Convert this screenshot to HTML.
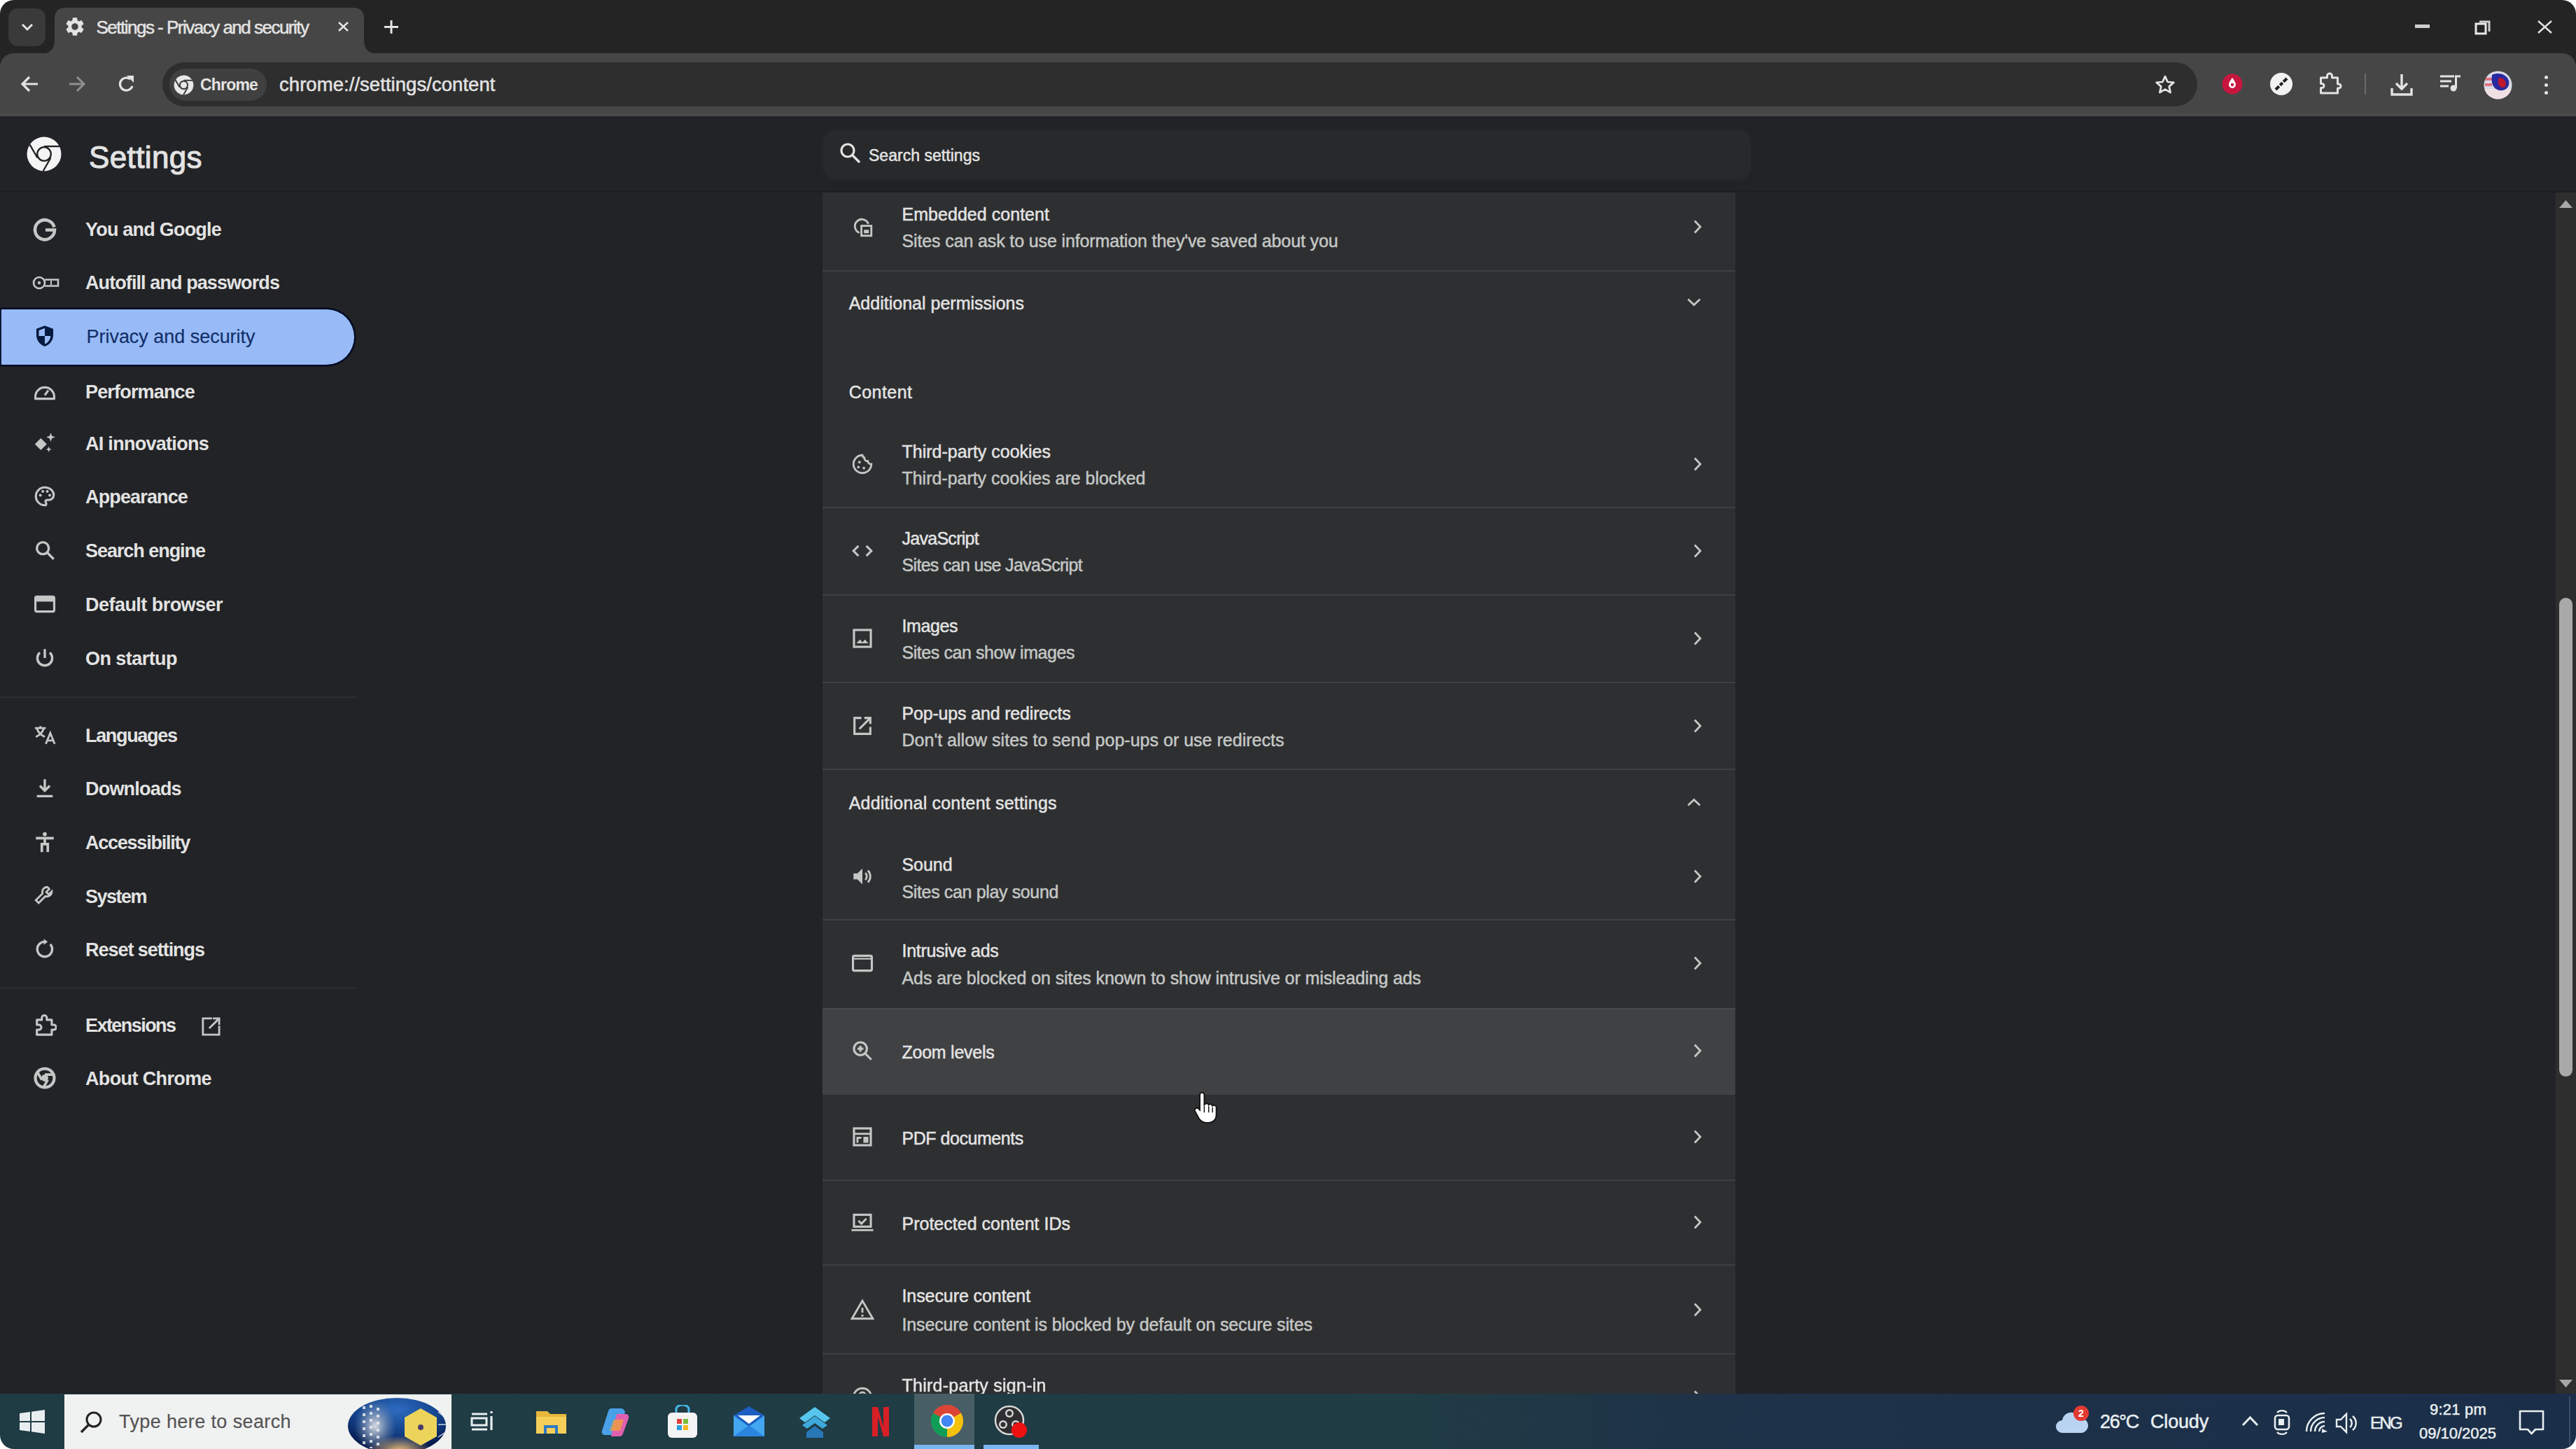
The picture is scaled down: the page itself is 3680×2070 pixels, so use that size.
<!DOCTYPE html>
<html><head><meta charset="utf-8"><title>Settings - Privacy and security</title>
<style>
html,body{margin:0;padding:0;background:#ffffff;width:3680px;height:2070px;overflow:hidden;font-family:"Liberation Sans",sans-serif;}
#root{position:relative;width:3680px;height:2070px;overflow:hidden;filter:blur(0.5px);}
</style></head><body><div id="root">
<div style="position:absolute;left:0;top:0;width:3680px;height:1991px;background:#242424;border-radius:20px 20px 0 0"></div>
<div style="position:absolute;left:12px;top:12px;width:53px;height:54px;background:#3a3a3a;border-radius:14px;"></div>
<svg style="position:absolute;left:26px;top:28px;" width="26" height="20" viewBox="0 0 26 20"><path d="M6 7l7 7 7-7" fill="none" stroke="#e3e3e3" stroke-width="3"/></svg>
<svg style="position:absolute;left:58px;top:11px" width="482" height="66" viewBox="0 0 482 66">
<path d="M0 66 Q20 66 20 46 L20 16 Q20 0 36 0 L446 0 Q462 0 462 16 L462 46 Q462 66 482 66 Z" fill="#464646"/></svg>
<svg style="position:absolute;left:91px;top:22px;" width="32" height="32" viewBox="0 0 24 24"><path fill="#e3e3e3" d="M19.14 12.94c.04-.3.06-.61.06-.94 0-.32-.02-.64-.07-.94l2.03-1.58a.49.49 0 00.12-.61l-1.92-3.32a.488.488 0 00-.59-.22l-2.39.96c-.5-.38-1.03-.7-1.62-.94l-.36-2.54a.484.484 0 00-.48-.41h-3.84c-.24 0-.43.17-.47.41l-.36 2.54c-.59.24-1.13.57-1.62.94l-2.39-.96c-.22-.08-.47 0-.59.22L2.74 8.87c-.12.21-.08.47.12.61l2.03 1.58c-.05.3-.09.63-.09.94s.02.64.07.94l-2.03 1.58a.49.49 0 00-.12.61l1.92 3.32c.12.22.37.29.59.22l2.39-.96c.5.38 1.03.7 1.62.94l.36 2.54c.05.24.24.41.48.41h3.84c.24 0 .44-.17.47-.41l.36-2.54c.59-.24 1.13-.56 1.62-.94l2.39.96c.22.08.47 0 .59-.22l1.92-3.32c.12-.22.07-.47-.12-.61l-2.01-1.58zM12 15.6c-1.98 0-3.6-1.62-3.6-3.6s1.62-3.6 3.6-3.6 3.6 1.62 3.6 3.6-1.62 3.6-3.6 3.6z"/></svg>
<div style="position:absolute;left:137.5px;top:26.4px;font-size:26px;line-height:26px;font-weight:400;color:#e3e3e3;letter-spacing:-1.507px;white-space:pre;-webkit-text-stroke:0.50px #e3e3e3;">Settings - Privacy and security</div>
<svg style="position:absolute;left:482px;top:30px;" width="17" height="16" viewBox="0 0 17 16"><path d="M2 2l13 12M15 2L2 14" stroke="#e3e3e3" stroke-width="2.6"/></svg>
<svg style="position:absolute;left:548px;top:28px;" width="22" height="21" viewBox="0 0 22 21"><path d="M11 1v19M1 10.5h20" stroke="#e3e3e3" stroke-width="3"/></svg>
<div style="position:absolute;left:3450px;top:35px;width:21px;height:5px;background:#cfcfcf;border-radius:0px;"></div>
<svg style="position:absolute;left:3535px;top:28px;" width="25" height="22" viewBox="0 0 25 22"><rect x="2" y="6" width="14" height="14" fill="none" stroke="#e8e8e8" stroke-width="3"/><path d="M7 3h14v14" fill="none" stroke="#cfcfcf" stroke-width="3"/></svg>
<svg style="position:absolute;left:3624px;top:28px;" width="23" height="21" viewBox="0 0 23 21"><path d="M2 2l19 17M21 2L2 19" stroke="#e3e3e3" stroke-width="2.4"/></svg>
<div style="position:absolute;left:0px;top:76px;width:3680px;height:90px;background:#464646;border-radius:20px 20px 0 0;"></div>
<div style="position:absolute;left:0px;top:162px;width:3680px;height:4px;background:#4c4c4c;border-radius:0px;"></div>
<svg style="position:absolute;left:28px;top:106px;" width="28" height="28" viewBox="0 0 28 28"><path d="M26 14H5M14 4L4 14l10 10" fill="none" stroke="#e3e3e3" stroke-width="3.2"/></svg>
<svg style="position:absolute;left:97px;top:107px;" width="26" height="26" viewBox="0 0 26 26"><path d="M2 13h21M13 3l10 10-10 10" fill="none" stroke="#8f8f8f" stroke-width="3"/></svg>
<svg style="position:absolute;left:167px;top:106px;" width="28" height="30" viewBox="0 0 28 30"><path d="M22 17a9 9 0 1 1-3-10" fill="none" stroke="#e3e3e3" stroke-width="3.2"/><path d="M14 2h10v10z" fill="#e3e3e3"/></svg>
<div style="position:absolute;left:232px;top:89px;width:2907px;height:63px;background:#2e2e2e;border-radius:32px;"></div>
<div style="position:absolute;left:242px;top:98px;width:139px;height:46px;background:#404040;border-radius:23px;"></div>
<svg style="position:absolute;left:248px;top:107px;" width="29" height="29" viewBox="0 0 48 48"><circle cx="24" cy="24" r="23" fill="#e8e8e8"/><circle cx="24" cy="24" r="11" fill="#404040"/><circle cx="24" cy="24" r="7.5" fill="#e8e8e8"/><path d="M24 13L45 13" stroke="#404040" stroke-width="3.4"/><path d="M14.5 29.5L4 11.5" stroke="#404040" stroke-width="3.4"/><path d="M33.5 29.5L23 47.5" stroke="#404040" stroke-width="3.4"/></svg>
<div style="position:absolute;left:286.0px;top:109.5px;font-size:23px;line-height:23px;font-weight:700;color:#e3e3e3;letter-spacing:-0.818px;white-space:pre;">Chrome</div>
<div style="position:absolute;left:399.0px;top:107.2px;font-size:27.5px;line-height:27.5px;font-weight:400;color:#e3e3e3;letter-spacing:0.050px;white-space:pre;-webkit-text-stroke:0.50px #e3e3e3;">chrome://settings/content</div>
<svg style="position:absolute;left:3078px;top:106px;" width="30" height="30" viewBox="0 0 24 24"><path d="M12 2.5l2.9 6.3 6.9.7-5.2 4.6 1.5 6.8L12 17.3l-6.1 3.6 1.5-6.8-5.2-4.6 6.9-.7z" fill="none" stroke="#e3e3e3" stroke-width="2.2" stroke-linejoin="round"/></svg>
<svg style="position:absolute;left:3174px;top:105px;" width="30" height="30" viewBox="0 0 30 30"><circle cx="15" cy="15" r="14.5" fill="#c8163f"/><path d="M15 6c-1 2-5 6-5 10a5 5 0 0 0 10 0c0-4-4-8-5-10z" fill="#fff"/><circle cx="15" cy="16" r="2.2" fill="#c8163f"/></svg>
<svg style="position:absolute;left:3242px;top:103px;" width="34" height="34" viewBox="0 0 34 34"><circle cx="17" cy="17" r="16" fill="#f2f2f2"/><path d="M9 25L25 9" stroke="#222" stroke-width="4"/><path d="M12 17l5 5M17 12l5 5" stroke="#f2f2f2" stroke-width="2"/></svg>
<svg style="position:absolute;left:3311px;top:103px;" width="35" height="33" viewBox="0 0 32 33"><path d="M3 8h9V5.5a3.5 3.5 0 0 1 7 0V8h8v9h1.5a3 3 0 0 1 0 6H27v7H3v-7.5h1.5a3 3 0 0 0 0-6H3z" fill="none" stroke="#e3e3e3" stroke-width="3" stroke-linejoin="round"/></svg>
<div style="position:absolute;left:3378px;top:105px;width:2px;height:30px;background:#6a6a6a;border-radius:0px;"></div>
<svg style="position:absolute;left:3414px;top:104px;" width="34" height="34" viewBox="0 0 34 34"><path d="M17 2v21M9 15l8 8 8-8" fill="none" stroke="#e3e3e3" stroke-width="3.4"/><path d="M3 22v9h28v-9" fill="none" stroke="#e3e3e3" stroke-width="3.4"/></svg>
<svg style="position:absolute;left:3485px;top:106px;" width="31" height="26" viewBox="0 0 31 26"><path d="M1 3h20M1 10h16M1 17h12" stroke="#e3e3e3" stroke-width="3"/><path d="M22 3h8M23.5 3v17" stroke="#e3e3e3" stroke-width="3"/><circle cx="20" cy="20" r="4.5" fill="#e3e3e3"/></svg>
<svg style="position:absolute;left:3548px;top:101px" width="41" height="41" viewBox="0 0 41 41">
<defs><clipPath id="av"><circle cx="20.5" cy="20.5" r="20"/></clipPath></defs>
<g clip-path="url(#av)"><rect width="41" height="41" fill="#d9dbe8"/><rect x="0" y="26" width="41" height="15" fill="#f0e0e4"/>
<path d="M2 10h12v4H2zM2 18h10v4H2z" fill="#e3707f"/><path d="M12 6c8-4 20-2 24 8 2 8-4 16-14 14-8-2-12-10-10-22z" fill="#2a2aa0"/>
<path d="M22 10c6 0 10 4 10 9s-4 6-8 4c-3-2-4-8-2-13z" fill="#c0182c"/></g></svg>
<div style="position:absolute;left:3635px;top:107.5px;width:5px;height:5px;background:#e3e3e3;border-radius:3px;"></div>
<div style="position:absolute;left:3635px;top:118.5px;width:5px;height:5px;background:#e3e3e3;border-radius:3px;"></div>
<div style="position:absolute;left:3635px;top:129.5px;width:5px;height:5px;background:#e3e3e3;border-radius:3px;"></div>
<div style="position:absolute;left:0px;top:167px;width:3680px;height:1824px;background:#222326;border-radius:0px;"></div>
<div style="position:absolute;left:0px;top:272px;width:3680px;height:3px;background:#1d1e20;border-radius:0px;"></div>
<svg style="position:absolute;left:38px;top:195px" width="50" height="50" viewBox="0 0 48 48">
<circle cx="24" cy="24" r="23.5" fill="#f4f4f4"/><circle cx="24" cy="24" r="10.5" fill="#202124"/><circle cx="24" cy="24" r="8.3" fill="#f4f4f4"/>
<path d="M24 13.5L45 13.5" stroke="#202124" stroke-width="2.2"/><path d="M14.9 29.3L4.4 11.1" stroke="#202124" stroke-width="2.2"/><path d="M33.1 29.3L22.6 47.5" stroke="#202124" stroke-width="2.2"/></svg>
<div style="position:absolute;left:127.0px;top:202.8px;font-size:44px;line-height:44px;font-weight:400;color:#e3e3e3;letter-spacing:0.377px;white-space:pre;-webkit-text-stroke:1.1px #e3e3e3;">Settings</div>
<div style="position:absolute;left:1176px;top:186px;width:1325px;height:70px;background:#28292b;border-radius:18px;box-shadow:0 0 6px 2px #26272a"></div>
<svg style="position:absolute;left:1199px;top:203px;" width="32" height="32" viewBox="0 0 32 32"><circle cx="12" cy="12" r="9" fill="none" stroke="#e3e3e3" stroke-width="3.2"/><path d="M18.5 18.5L29 29" stroke="#e3e3e3" stroke-width="3.4"/></svg>
<div style="position:absolute;left:1241.0px;top:210.5px;font-size:23px;line-height:23px;font-weight:400;color:#e3e3e3;letter-spacing:0.031px;white-space:pre;-webkit-text-stroke:0.50px #e3e3e3;">Search settings</div>
<div style="position:absolute;left:0px;top:441.5px;width:506px;height:79px;background:#98bbf7;border-radius:0 39.5px 39.5px 0;box-shadow:0 0 0 2.5px #020b24"></div>
<div style="position:absolute;left:0px;top:441.5px;width:2px;height:79px;background:#0a1a3a;border-radius:0px;"></div>
<div style="position:absolute;left:122.0px;top:315.1px;font-size:27px;line-height:27px;font-weight:700;color:#e3e3e3;letter-spacing:-0.786px;white-space:pre;">You and Google</div>
<svg style="position:absolute;left:47px;top:310px;" width="36" height="36" viewBox="0 0 36 36"><path d="M30.5 14.5A14 14 0 1 0 31 18.5H18" fill="none" stroke="#c4c7c5" stroke-width="4.6"/></svg>
<div style="position:absolute;left:122.0px;top:391.1px;font-size:27px;line-height:27px;font-weight:700;color:#e3e3e3;letter-spacing:-0.911px;white-space:pre;">Autofill and passwords</div>
<svg style="position:absolute;left:46px;top:392px;" width="40" height="24" viewBox="0 0 40 24"><circle cx="10" cy="12" r="8" fill="none" stroke="#c4c7c5" stroke-width="2.6"/><circle cx="10" cy="12" r="2.2" fill="#c4c7c5"/><path d="M18 7.5h19v9H18" fill="none" stroke="#c4c7c5" stroke-width="2.6"/><path d="M27 9v6" stroke="#c4c7c5" stroke-width="2"/></svg>
<div style="position:absolute;left:123.5px;top:468.1px;font-size:27px;line-height:27px;font-weight:400;color:#14306a;letter-spacing:-0.030px;white-space:pre;-webkit-text-stroke:0.2px #14306a;">Privacy and security</div>
<svg style="position:absolute;left:47px;top:463px;" width="34" height="34" viewBox="0 0 24 24"><path d="M12 1.5L3.5 4.8v6.2c0 5.3 3.6 10 8.5 11.5 4.9-1.5 8.5-6.2 8.5-11.5V4.8z" fill="#061a40"/><path d="M12 4L6 6.4V12h6zM12 12v8.2c3.1-1.3 5.5-4.4 5.9-8.2z" fill="#98bbf7"/></svg>
<div style="position:absolute;left:122.0px;top:547.1px;font-size:27px;line-height:27px;font-weight:700;color:#e3e3e3;letter-spacing:-0.825px;white-space:pre;">Performance</div>
<svg style="position:absolute;left:47px;top:542px;" width="34" height="34" viewBox="0 0 24 24"><path d="M2.5 17.5a9.5 9.5 0 1 1 19 0v2h-19z" fill="none" stroke="#c4c7c5" stroke-width="2.2" stroke-linejoin="round"/><path d="M12 16l3.5-5" stroke="#c4c7c5" stroke-width="2.2"/></svg>
<div style="position:absolute;left:122.0px;top:621.1px;font-size:27px;line-height:27px;font-weight:700;color:#e3e3e3;letter-spacing:-0.715px;white-space:pre;">AI innovations</div>
<svg style="position:absolute;left:47px;top:616px;" width="34" height="34" viewBox="0 0 24 24"><path d="M8 7l6 6-6 6-6-6z" fill="#c4c7c5"/><path d="M18 1.5l1.2 3.3 3.3 1.2-3.3 1.2L18 10.5l-1.2-3.3L13.5 6l3.3-1.2z" fill="#c4c7c5"/><path d="M16 15.5l.8 2 2 .8-2 .8-.8 2-.8-2-2-.8 2-.8z" fill="#c4c7c5"/></svg>
<div style="position:absolute;left:122.0px;top:697.1px;font-size:27px;line-height:27px;font-weight:700;color:#e3e3e3;letter-spacing:-0.858px;white-space:pre;">Appearance</div>
<svg style="position:absolute;left:47px;top:692px;" width="34" height="34" viewBox="0 0 24 24"><path d="M12 3a9 9 0 0 0 0 18c1 0 1.5-.7 1.5-1.5 0-1-.8-1.3-.8-2.2 0-.9.7-1.6 1.6-1.6H16a5 5 0 0 0 5-5c0-4.3-4-7.7-9-7.7z" fill="none" stroke="#c4c7c5" stroke-width="2.2"/><circle cx="7.5" cy="11" r="1.4" fill="#c4c7c5"/><circle cx="10" cy="7" r="1.4" fill="#c4c7c5"/><circle cx="14.5" cy="7" r="1.4" fill="#c4c7c5"/><circle cx="17" cy="11" r="1.4" fill="#c4c7c5"/></svg>
<div style="position:absolute;left:122.0px;top:774.1px;font-size:27px;line-height:27px;font-weight:700;color:#e3e3e3;letter-spacing:-1.044px;white-space:pre;">Search engine</div>
<svg style="position:absolute;left:47px;top:769px;" width="34" height="34" viewBox="0 0 24 24"><circle cx="10" cy="10" r="6" fill="none" stroke="#c4c7c5" stroke-width="2.4"/><path d="M14.5 14.5L21 21" stroke="#c4c7c5" stroke-width="2.4"/></svg>
<div style="position:absolute;left:122.0px;top:851.1px;font-size:27px;line-height:27px;font-weight:700;color:#e3e3e3;letter-spacing:-0.536px;white-space:pre;">Default browser</div>
<svg style="position:absolute;left:47px;top:846px;" width="34" height="34" viewBox="0 0 24 24"><rect x="2.5" y="4.5" width="19" height="15" rx="1.5" fill="none" stroke="#c4c7c5" stroke-width="2.2"/><path d="M2.5 7.5h19" stroke="#c4c7c5" stroke-width="4"/></svg>
<div style="position:absolute;left:122.0px;top:928.1px;font-size:27px;line-height:27px;font-weight:700;color:#e3e3e3;letter-spacing:-0.552px;white-space:pre;">On startup</div>
<svg style="position:absolute;left:47px;top:923px;" width="34" height="34" viewBox="0 0 24 24"><path d="M12 3v9" stroke="#c4c7c5" stroke-width="2.4"/><path d="M7 6.5a7.5 7.5 0 1 0 10 0" fill="none" stroke="#c4c7c5" stroke-width="2.4"/></svg>
<div style="position:absolute;left:122.0px;top:1038.1px;font-size:27px;line-height:27px;font-weight:700;color:#e3e3e3;letter-spacing:-1.326px;white-space:pre;">Languages</div>
<svg style="position:absolute;left:47px;top:1033px;" width="34" height="34" viewBox="0 0 24 24"><path d="M2 5h11M7.5 3v2M4 5c1 4 4 7 8 9M11 5c-1 4-4 7-8 9" fill="none" stroke="#c4c7c5" stroke-width="2"/><path d="M13 21l4.5-11 4.5 11M14.5 17.5h6" fill="none" stroke="#c4c7c5" stroke-width="2"/></svg>
<div style="position:absolute;left:122.0px;top:1114.1px;font-size:27px;line-height:27px;font-weight:700;color:#e3e3e3;letter-spacing:-0.802px;white-space:pre;">Downloads</div>
<svg style="position:absolute;left:47px;top:1109px;" width="34" height="34" viewBox="0 0 24 24"><path d="M12 3v11M7 9.5l5 5 5-5M4 20h16" fill="none" stroke="#c4c7c5" stroke-width="2.4"/></svg>
<div style="position:absolute;left:122.0px;top:1191.1px;font-size:27px;line-height:27px;font-weight:700;color:#e3e3e3;letter-spacing:-1.238px;white-space:pre;">Accessibility</div>
<svg style="position:absolute;left:47px;top:1186px;" width="34" height="34" viewBox="0 0 24 24"><circle cx="12" cy="4" r="2" fill="#c4c7c5"/><path d="M3 8h18M12 8v6M9 22v-8h6v8" fill="none" stroke="#c4c7c5" stroke-width="2.6"/></svg>
<div style="position:absolute;left:122.0px;top:1267.6px;font-size:27px;line-height:27px;font-weight:700;color:#e3e3e3;letter-spacing:-1.510px;white-space:pre;">System</div>
<svg style="position:absolute;left:47px;top:1262.5px;" width="34" height="34" viewBox="0 0 24 24"><path d="M14.5 3a5 5 0 0 0-4.8 6.5L3 16.2 5.8 19l6.7-6.7A5 5 0 0 0 19 7.5l-3 3-2.5-2.5 3-3A5 5 0 0 0 14.5 3z" fill="none" stroke="#c4c7c5" stroke-width="2"/></svg>
<div style="position:absolute;left:122.0px;top:1344.1px;font-size:27px;line-height:27px;font-weight:700;color:#e3e3e3;letter-spacing:-1.040px;white-space:pre;">Reset settings</div>
<svg style="position:absolute;left:47px;top:1339px;" width="34" height="34" viewBox="0 0 24 24"><path d="M17.5 7A7.5 7.5 0 1 1 12 4.5" fill="none" stroke="#c4c7c5" stroke-width="2.4"/><path d="M11 1.5l4 3-4 3z" fill="#c4c7c5"/></svg>
<div style="position:absolute;left:122.0px;top:1452.1px;font-size:27px;line-height:27px;font-weight:700;color:#e3e3e3;letter-spacing:-1.555px;white-space:pre;">Extensions</div>
<svg style="position:absolute;left:47px;top:1447px;" width="34" height="34" viewBox="0 0 24 24"><path d="M4 7h5V5a2.5 2.5 0 0 1 5 0v2h5v5h2a2.5 2.5 0 0 1 0 5h-2v5H4v-5h2a2.5 2.5 0 0 0 0-5H4z" fill="none" stroke="#c4c7c5" stroke-width="2.2" stroke-linejoin="round"/></svg>
<div style="position:absolute;left:122.0px;top:1528.1px;font-size:27px;line-height:27px;font-weight:700;color:#e3e3e3;letter-spacing:-0.624px;white-space:pre;">About Chrome</div>
<svg style="position:absolute;left:47px;top:1523px;" width="34" height="34" viewBox="0 0 24 24"><circle cx="12" cy="12" r="9.5" fill="none" stroke="#c4c7c5" stroke-width="3"/><circle cx="12" cy="12" r="3.5" fill="#c4c7c5"/><path d="M12 8.5h9M9 13.8L4.5 6M15 13.8l-4.5 7.8" stroke="#c4c7c5" stroke-width="2.6"/></svg>
<div style="position:absolute;left:0px;top:995px;width:510px;height:2px;background:#2e2f32;border-radius:0px;"></div>
<div style="position:absolute;left:0px;top:1410px;width:510px;height:2px;background:#2c2d30;border-radius:0px;"></div>
<svg style="position:absolute;left:285px;top:1451px;" width="33" height="31" viewBox="0 0 24 24"><path d="M13 3H3v18h18V11" fill="none" stroke="#c4c7c5" stroke-width="2.2"/><path d="M10 14L21 3M14 3h7v7" fill="none" stroke="#c4c7c5" stroke-width="2.2"/></svg>
<div style="position:absolute;left:1175px;top:275px;width:1304px;height:1716px;background:#2e2f31;border-radius:0px;"></div>
<div style="position:absolute;left:1288.5px;top:293.8px;font-size:25px;line-height:25px;font-weight:400;color:#e3e3e3;letter-spacing:0.038px;white-space:pre;-webkit-text-stroke:0.50px #e3e3e3;">Embedded content</div>
<div style="position:absolute;left:1288.5px;top:331.8px;font-size:25px;line-height:25px;font-weight:400;color:#c4c7c5;letter-spacing:-0.128px;white-space:pre;-webkit-text-stroke:0.50px #c4c7c5;">Sites can ask to use information they've saved about you</div>
<svg style="position:absolute;left:1215px;top:307px;" width="34" height="34" viewBox="0 0 24 24"><path d="M9 18a7 7 0 1 1 9-9" fill="none" stroke="#c4c7c5" stroke-width="2"/><rect x="11" y="11" width="10" height="10" fill="none" stroke="#c4c7c5" stroke-width="2"/><rect x="13.5" y="15" width="5" height="3.5" fill="#c4c7c5"/></svg>
<svg style="position:absolute;left:2417px;top:313px;" width="16" height="22" viewBox="0 0 16 22"><path d="M4 2.5l8 8.5-8 8.5" fill="none" stroke="#c4c7c5" stroke-width="2.8"/></svg>
<div style="position:absolute;left:1175px;top:386px;width:1304px;height:2px;background:#3f4042;border-radius:0px;"></div>
<div style="position:absolute;left:1212.7px;top:421.3px;font-size:25px;line-height:25px;font-weight:400;color:#e3e3e3;letter-spacing:0.008px;white-space:pre;-webkit-text-stroke:0.50px #e3e3e3;">Additional permissions</div>
<svg style="position:absolute;left:2409px;top:424px;" width="22" height="16" viewBox="0 0 22 16"><path d="M2.5 3.5l8.5 8 8.5-8" fill="none" stroke="#c4c7c5" stroke-width="2.8"/></svg>
<div style="position:absolute;left:1212.7px;top:548.1px;font-size:25px;line-height:25px;font-weight:400;color:#e3e3e3;letter-spacing:0.462px;white-space:pre;-webkit-text-stroke:0.50px #e3e3e3;">Content</div>
<div style="position:absolute;left:1288.5px;top:632.8px;font-size:25px;line-height:25px;font-weight:400;color:#e3e3e3;letter-spacing:-0.004px;white-space:pre;-webkit-text-stroke:0.50px #e3e3e3;">Third-party cookies</div>
<div style="position:absolute;left:1288.5px;top:670.8px;font-size:25px;line-height:25px;font-weight:400;color:#c4c7c5;letter-spacing:-0.025px;white-space:pre;-webkit-text-stroke:0.50px #c4c7c5;">Third-party cookies are blocked</div>
<svg style="position:absolute;left:1215px;top:646px;" width="34" height="34" viewBox="0 0 24 24"><path d="M12 3a9 9 0 1 0 9 9 3 3 0 0 1-3.5-3A3 3 0 0 1 14 5.5 3 3 0 0 1 12 3z" fill="none" stroke="#c4c7c5" stroke-width="2"/><circle cx="9" cy="10" r="1.3" fill="#c4c7c5"/><circle cx="8" cy="15" r="1.3" fill="#c4c7c5"/><circle cx="13.5" cy="16" r="1.3" fill="#c4c7c5"/></svg>
<svg style="position:absolute;left:2417px;top:652px;" width="16" height="22" viewBox="0 0 16 22"><path d="M4 2.5l8 8.5-8 8.5" fill="none" stroke="#c4c7c5" stroke-width="2.8"/></svg>
<div style="position:absolute;left:1175px;top:724px;width:1304px;height:2px;background:#3f4042;border-radius:0px;"></div>
<div style="position:absolute;left:1288.5px;top:756.8px;font-size:25px;line-height:25px;font-weight:400;color:#e3e3e3;letter-spacing:-0.722px;white-space:pre;-webkit-text-stroke:0.50px #e3e3e3;">JavaScript</div>
<div style="position:absolute;left:1288.5px;top:794.8px;font-size:25px;line-height:25px;font-weight:400;color:#c4c7c5;letter-spacing:-0.677px;white-space:pre;-webkit-text-stroke:0.50px #c4c7c5;">Sites can use JavaScript</div>
<svg style="position:absolute;left:1215px;top:770px;" width="34" height="34" viewBox="0 0 24 24"><path d="M8 7l-5 5 5 5M16 7l5 5-5 5" fill="none" stroke="#c4c7c5" stroke-width="2.2"/></svg>
<svg style="position:absolute;left:2417px;top:776px;" width="16" height="22" viewBox="0 0 16 22"><path d="M4 2.5l8 8.5-8 8.5" fill="none" stroke="#c4c7c5" stroke-width="2.8"/></svg>
<div style="position:absolute;left:1175px;top:849px;width:1304px;height:2px;background:#3f4042;border-radius:0px;"></div>
<div style="position:absolute;left:1288.5px;top:881.8px;font-size:25px;line-height:25px;font-weight:400;color:#e3e3e3;letter-spacing:-0.414px;white-space:pre;-webkit-text-stroke:0.50px #e3e3e3;">Images</div>
<div style="position:absolute;left:1288.5px;top:919.8px;font-size:25px;line-height:25px;font-weight:400;color:#c4c7c5;letter-spacing:-0.438px;white-space:pre;-webkit-text-stroke:0.50px #c4c7c5;">Sites can show images</div>
<svg style="position:absolute;left:1215px;top:895px;" width="34" height="34" viewBox="0 0 24 24"><rect x="3.5" y="3.5" width="17" height="17" fill="none" stroke="#c4c7c5" stroke-width="2.2"/><path d="M6 17l3.5-4 2.5 3 2.5-3 3.5 4z" fill="#c4c7c5"/></svg>
<svg style="position:absolute;left:2417px;top:901px;" width="16" height="22" viewBox="0 0 16 22"><path d="M4 2.5l8 8.5-8 8.5" fill="none" stroke="#c4c7c5" stroke-width="2.8"/></svg>
<div style="position:absolute;left:1175px;top:974px;width:1304px;height:2px;background:#3f4042;border-radius:0px;"></div>
<div style="position:absolute;left:1288.5px;top:1006.8px;font-size:25px;line-height:25px;font-weight:400;color:#e3e3e3;letter-spacing:-0.171px;white-space:pre;-webkit-text-stroke:0.50px #e3e3e3;">Pop-ups and redirects</div>
<div style="position:absolute;left:1288.5px;top:1044.8px;font-size:25px;line-height:25px;font-weight:400;color:#c4c7c5;letter-spacing:0.013px;white-space:pre;-webkit-text-stroke:0.50px #c4c7c5;">Don't allow sites to send pop-ups or use redirects</div>
<svg style="position:absolute;left:1215px;top:1020px;" width="34" height="34" viewBox="0 0 24 24"><path d="M11 4H4v16h16v-7" fill="none" stroke="#c4c7c5" stroke-width="2.2"/><path d="M9 15L20 4M14 4h6v6" fill="none" stroke="#c4c7c5" stroke-width="2.2"/></svg>
<svg style="position:absolute;left:2417px;top:1026px;" width="16" height="22" viewBox="0 0 16 22"><path d="M4 2.5l8 8.5-8 8.5" fill="none" stroke="#c4c7c5" stroke-width="2.8"/></svg>
<div style="position:absolute;left:1175px;top:1098px;width:1304px;height:2px;background:#3f4042;border-radius:0px;"></div>
<div style="position:absolute;left:1212.7px;top:1134.8px;font-size:25px;line-height:25px;font-weight:400;color:#e3e3e3;letter-spacing:0.190px;white-space:pre;-webkit-text-stroke:0.50px #e3e3e3;">Additional content settings</div>
<svg style="position:absolute;left:2409px;top:1138px;" width="22" height="16" viewBox="0 0 22 16"><path d="M2.5 12.5l8.5-8 8.5 8" fill="none" stroke="#c4c7c5" stroke-width="2.8"/></svg>
<div style="position:absolute;left:1288.5px;top:1223.3px;font-size:25px;line-height:25px;font-weight:400;color:#e3e3e3;letter-spacing:-0.059px;white-space:pre;-webkit-text-stroke:0.50px #e3e3e3;">Sound</div>
<div style="position:absolute;left:1288.5px;top:1261.8px;font-size:25px;line-height:25px;font-weight:400;color:#c4c7c5;letter-spacing:-0.360px;white-space:pre;-webkit-text-stroke:0.50px #c4c7c5;">Sites can play sound</div>
<svg style="position:absolute;left:1215px;top:1235px;" width="34" height="34" viewBox="0 0 24 24"><path d="M3 9v6h4l5 5V4L7 9z" fill="#c4c7c5"/><path d="M15 8.5a5 5 0 0 1 0 7M17.5 6a8.5 8.5 0 0 1 0 12" fill="none" stroke="#c4c7c5" stroke-width="2"/></svg>
<svg style="position:absolute;left:2417px;top:1241px;" width="16" height="22" viewBox="0 0 16 22"><path d="M4 2.5l8 8.5-8 8.5" fill="none" stroke="#c4c7c5" stroke-width="2.8"/></svg>
<div style="position:absolute;left:1288.5px;top:1346.3px;font-size:25px;line-height:25px;font-weight:400;color:#e3e3e3;letter-spacing:-0.288px;white-space:pre;-webkit-text-stroke:0.50px #e3e3e3;">Intrusive ads</div>
<div style="position:absolute;left:1288.5px;top:1384.8px;font-size:25px;line-height:25px;font-weight:400;color:#c4c7c5;letter-spacing:-0.093px;white-space:pre;-webkit-text-stroke:0.50px #c4c7c5;">Ads are blocked on sites known to show intrusive or misleading ads</div>
<svg style="position:absolute;left:1215px;top:1359px;" width="34" height="34" viewBox="0 0 24 24"><rect x="2.5" y="4.5" width="19" height="15" rx="1.5" fill="none" stroke="#c4c7c5" stroke-width="2.2"/><path d="M2.5 7.5h19" stroke="#c4c7c5" stroke-width="1.6"/></svg>
<svg style="position:absolute;left:2417px;top:1365px;" width="16" height="22" viewBox="0 0 16 22"><path d="M4 2.5l8 8.5-8 8.5" fill="none" stroke="#c4c7c5" stroke-width="2.8"/></svg>
<div style="position:absolute;left:1175px;top:1313px;width:1304px;height:2px;background:#3f4042;border-radius:0px;"></div>
<div style="position:absolute;left:1175px;top:1440px;width:1304px;height:124px;background:#404143;border-radius:0px;"></div>
<div style="position:absolute;left:1175px;top:1440px;width:1304px;height:2px;background:#48494b;border-radius:0px;"></div>
<div style="position:absolute;left:1288.5px;top:1490.8px;font-size:25px;line-height:25px;font-weight:400;color:#e3e3e3;letter-spacing:-0.251px;white-space:pre;-webkit-text-stroke:0.50px #e3e3e3;">Zoom levels</div>
<svg style="position:absolute;left:1215px;top:1484px;" width="34" height="34" viewBox="0 0 24 24"><circle cx="10" cy="10" r="6.5" fill="none" stroke="#c4c7c5" stroke-width="2.2"/><path d="M15 15l6 6M10 7v6M7 10h6" stroke="#c4c7c5" stroke-width="2.2"/></svg>
<svg style="position:absolute;left:2417px;top:1490px;" width="16" height="22" viewBox="0 0 16 22"><path d="M4 2.5l8 8.5-8 8.5" fill="none" stroke="#c4c7c5" stroke-width="2.8"/></svg>
<div style="position:absolute;left:1288.5px;top:1614.1px;font-size:25px;line-height:25px;font-weight:400;color:#e3e3e3;letter-spacing:-0.458px;white-space:pre;-webkit-text-stroke:0.50px #e3e3e3;">PDF documents</div>
<svg style="position:absolute;left:1215px;top:1607px;" width="34" height="34" viewBox="0 0 24 24"><rect x="3.5" y="3.5" width="17" height="17" fill="none" stroke="#c4c7c5" stroke-width="2.2"/><path d="M3.5 9h17" stroke="#c4c7c5" stroke-width="2"/><path d="M6 12h5v2H8v4H6zM13 12h5v6h-5z" fill="#c4c7c5"/></svg>
<svg style="position:absolute;left:2417px;top:1613px;" width="16" height="22" viewBox="0 0 16 22"><path d="M4 2.5l8 8.5-8 8.5" fill="none" stroke="#c4c7c5" stroke-width="2.8"/></svg>
<div style="position:absolute;left:1175px;top:1685px;width:1304px;height:2px;background:#3f4042;border-radius:0px;"></div>
<div style="position:absolute;left:1288.5px;top:1735.8px;font-size:25px;line-height:25px;font-weight:400;color:#e3e3e3;letter-spacing:0.004px;white-space:pre;-webkit-text-stroke:0.50px #e3e3e3;">Protected content IDs</div>
<svg style="position:absolute;left:1215px;top:1729px;" width="34" height="34" viewBox="0 0 24 24"><rect x="3.5" y="4.5" width="17" height="12" fill="none" stroke="#c4c7c5" stroke-width="2.2"/><path d="M1 20h22" stroke="#c4c7c5" stroke-width="2"/><path d="M8 10.5l3 3 5-5" fill="none" stroke="#c4c7c5" stroke-width="2"/></svg>
<svg style="position:absolute;left:2417px;top:1735px;" width="16" height="22" viewBox="0 0 16 22"><path d="M4 2.5l8 8.5-8 8.5" fill="none" stroke="#c4c7c5" stroke-width="2.8"/></svg>
<div style="position:absolute;left:1175px;top:1806px;width:1304px;height:2px;background:#3f4042;border-radius:0px;"></div>
<div style="position:absolute;left:1288.5px;top:1839.3px;font-size:25px;line-height:25px;font-weight:400;color:#e3e3e3;letter-spacing:-0.084px;white-space:pre;-webkit-text-stroke:0.50px #e3e3e3;">Insecure content</div>
<div style="position:absolute;left:1288.5px;top:1879.5px;font-size:25px;line-height:25px;font-weight:400;color:#c4c7c5;letter-spacing:-0.132px;white-space:pre;-webkit-text-stroke:0.50px #c4c7c5;">Insecure content is blocked by default on secure sites</div>
<svg style="position:absolute;left:1215px;top:1854px;" width="34" height="34" viewBox="0 0 24 24"><path d="M12 3L1.5 21h21z" fill="none" stroke="#c4c7c5" stroke-width="2"/><path d="M12 10v5M12 17v2" stroke="#c4c7c5" stroke-width="2"/></svg>
<svg style="position:absolute;left:2417px;top:1860px;" width="16" height="22" viewBox="0 0 16 22"><path d="M4 2.5l8 8.5-8 8.5" fill="none" stroke="#c4c7c5" stroke-width="2.8"/></svg>
<div style="position:absolute;left:1175px;top:1933px;width:1304px;height:2px;background:#3f4042;border-radius:0px;"></div>
<div style="position:absolute;left:1288.5px;top:1966.8px;font-size:25px;line-height:25px;font-weight:400;color:#e3e3e3;letter-spacing:0.250px;white-space:pre;-webkit-text-stroke:0.50px #e3e3e3;">Third-party sign-in</div>
<svg style="position:absolute;left:1215px;top:1979px;" width="34" height="34" viewBox="0 0 24 24"><circle cx="12" cy="12" r="9" fill="none" stroke="#c4c7c5" stroke-width="2"/><circle cx="12" cy="10" r="3" fill="none" stroke="#c4c7c5" stroke-width="2"/></svg>
<svg style="position:absolute;left:2417px;top:1985px;" width="16" height="22" viewBox="0 0 16 22"><path d="M4 2.5l8 8.5-8 8.5" fill="none" stroke="#c4c7c5" stroke-width="2.8"/></svg>
<div style="position:absolute;left:3651px;top:275px;width:29px;height:1716px;background:#2e2e2e;border-radius:0px;"></div>
<svg style="position:absolute;left:3655px;top:285px;" width="21" height="13" viewBox="0 0 21 13"><path d="M10.5 1L20 12H1z" fill="#a8a8a8"/></svg>
<div style="position:absolute;left:3656px;top:854px;width:19px;height:684px;background:#a9a9a9;border-radius:10px;"></div>
<svg style="position:absolute;left:3655px;top:1970px;" width="21" height="13" viewBox="0 0 21 13"><path d="M10.5 12L20 1H1z" fill="#a8a8a8"/></svg>
<svg style="position:absolute;left:1705px;top:1560px" width="38" height="46" viewBox="0 0 42 50">
<path d="M10 4a3.5 3.5 0 0 1 7 0v16l1-1a3.5 3.5 0 0 1 6 1 3.5 3.5 0 0 1 6 1.5 3.5 3.5 0 0 1 6 2V36c0 7-5 12-12 12h-4c-5 0-8-2-11-6L3 31a3.5 3.5 0 0 1 5-5l2 2z" fill="#fff" stroke="#111" stroke-width="2"/>
<path d="M17 22v10M24 22v10M30 24v8" stroke="#111" stroke-width="1.6"/></svg>
<div style="position:absolute;left:0;top:1991px;width:3680px;height:79px;background:linear-gradient(90deg,#1f3b44 0%,#203c45 55%,#1e3248 66%,#1b2e49 100%);border-radius:0 0 20px 20px"></div>
<svg style="position:absolute;left:28px;top:2014px;" width="36" height="34" viewBox="0 0 36 34"><path d="M0 5l15-2v13H0zM17 2.7L36 0v16H17zM0 18h15v13L0 29zM17 18h19v16l-19-2.7z" fill="#e8eef0"/></svg>
<div style="position:absolute;left:92px;top:1992px;width:553px;height:78px;background:#f0f1f1;border-radius:0px;"></div>
<svg style="position:absolute;left:114px;top:2015px;" width="34" height="34" viewBox="0 0 34 34"><circle cx="20" cy="13" r="10" fill="none" stroke="#222" stroke-width="3"/><path d="M13 20L2 31" stroke="#222" stroke-width="3.4"/></svg>
<div style="position:absolute;left:170.0px;top:2018.1px;font-size:27px;line-height:27px;font-weight:400;color:#555555;letter-spacing:0.387px;white-space:pre;-webkit-text-stroke:0.2px #555;">Type here to search</div>
<svg style="position:absolute;left:496px;top:1995px" width="144" height="75" viewBox="0 0 144 75">
<defs><clipPath id="jwc"><ellipse cx="71" cy="42" rx="70" ry="40"/></clipPath>
<radialGradient id="jw1" cx="0.5" cy="0.25" r="0.75"><stop offset="0" stop-color="#2d6bc0"/><stop offset="0.6" stop-color="#123f86"/><stop offset="1" stop-color="#061a4a"/></radialGradient>
<radialGradient id="jw2" cx="0.5" cy="0.5" r="0.5"><stop offset="0" stop-color="#f3c27a"/><stop offset="1" stop-color="#f3c27a" stop-opacity="0"/></radialGradient>
<radialGradient id="jw3" cx="0.5" cy="0.5" r="0.5"><stop offset="0" stop-color="#d8dce0"/><stop offset="1" stop-color="#8090a8" stop-opacity="0"/></radialGradient></defs>
<g clip-path="url(#jwc)"><rect width="144" height="75" fill="url(#jw1)"/>
<ellipse cx="40" cy="42" rx="30" ry="38" fill="url(#jw3)"/>
<ellipse cx="75" cy="78" rx="45" ry="22" fill="url(#jw2)"/>
<path d="M24 14v60M34 12v62M44 16v58" stroke="#e8ecf0" stroke-width="4" stroke-dasharray="4 6" opacity="0.85"/>
<polygon points="105,17 128,30 128,57 105,70 82,57 82,30" fill="#ecd45a"/><circle cx="105" cy="44" r="4" fill="#4a3a6a"/>
<path d="M130 22l12 10M130 40h14M130 58l12-8" stroke="#d0d8e8" stroke-width="1.5"/></g></svg>
<svg style="position:absolute;left:671px;top:2014px;" width="37" height="34" viewBox="0 0 37 34"><path d="M3 6h22M3 28h22" stroke="#e8eef0" stroke-width="3.2"/><rect x="3" y="12" width="21" height="10" fill="none" stroke="#e8eef0" stroke-width="3"/><path d="M31 2v3M31 9v20" stroke="#e8eef0" stroke-width="3.2"/></svg>
<svg style="position:absolute;left:765px;top:2010px;" width="45" height="40" viewBox="0 0 45 40"><path d="M1 6h16l4 4h23v28H1z" fill="#e8b63a"/><path d="M1 14h43v24H1z" fill="#f5cf5a"/><path d="M12 26h20v12H12z" fill="#2f79c8"/><path d="M16 30h12v8H16z" fill="#f5cf5a"/></svg>
<svg style="position:absolute;left:859px;top:2008px;" width="45" height="46" viewBox="0 0 45 46"><path d="M14 4h14c3 0 5 2 6 5l-9 28c-1 3-3 5-6 5H5c-3 0-5-3-4-6L10 8c1-3 2-4 4-4z" fill="#4aa0e8"/><path d="M22 12h13c3 0 5 3 4 6l-8 22c-1 3-3 4-6 4H14z" fill="#e060b0"/><path d="M18 20h14l-5 16H12z" fill="#f0a040" opacity="0.8"/></svg>
<svg style="position:absolute;left:952px;top:2007px;" width="46" height="48" viewBox="0 0 46 48"><path d="M14 12V6a9 6 0 0 1 18 0v6" fill="none" stroke="#46b8e8" stroke-width="3"/><rect x="2" y="11" width="42" height="36" rx="6" fill="#f4f4f4"/><rect x="15" y="20" width="7" height="7" fill="#e0423a"/><rect x="24" y="20" width="7" height="7" fill="#7bbf3a"/><rect x="15" y="29" width="7" height="7" fill="#2f9de0"/><rect x="24" y="29" width="7" height="7" fill="#f5b820"/></svg>
<svg style="position:absolute;left:1046px;top:2008px;" width="48" height="44" viewBox="0 0 48 44"><path d="M2 14L24 1l22 13v30H2z" fill="#1c5fc0"/><path d="M2 14l22 16 22-16v30H2z" fill="#42a7f0"/><path d="M2 44l22-16 22 16z" fill="#2b85e0"/><path d="M8 14h32l-16 12z" fill="#fff"/></svg>
<svg style="position:absolute;left:1140px;top:2008px;" width="48" height="46" viewBox="0 0 48 46"><path d="M2 18l22-16 22 16-8 6-14-10-14 10z" fill="#56c6ee"/><path d="M6 28l18-13 18 13-7 5-11-8-11 8z" fill="#3fa9dc"/><path d="M12 38l12-9 12 9v8H12z" fill="#2878b8"/></svg>
<svg style="position:absolute;left:1244px;top:2010px;" width="28" height="42" viewBox="0 0 28 42"><path d="M2 0h8l8 28V0h8v42h-8L10 14v28H2z" fill="#d81f26"/></svg>
<div style="position:absolute;left:1306px;top:1991px;width:86px;height:79px;background:rgba(255,255,255,0.18);border-radius:0px;"></div>
<div style="position:absolute;left:1306px;top:2064px;width:86px;height:6px;background:#7ab6f0;border-radius:0px;"></div>
<svg style="position:absolute;left:1329px;top:2006px" width="48" height="48" viewBox="0 0 48 48">
<circle cx="24" cy="24" r="23" fill="#db4437"/>
<path d="M24 24L4.1 12.5A23 23 0 0 0 24 47z" fill="#0f9d58"/><path d="M24 24L24 47A23 23 0 0 0 43.9 12.5z" fill="#f4c20d"/>
<path d="M24 12.5h19.9A23 23 0 0 0 4.1 12.5z" fill="#db4437"/>
<circle cx="24" cy="24" r="11" fill="#fff"/><circle cx="24" cy="24" r="8.5" fill="#4285f4"/></svg>
<div style="position:absolute;left:1405px;top:2064px;width:79px;height:6px;background:#7ab6f0;border-radius:0px;"></div>
<svg style="position:absolute;left:1420px;top:2007px" width="50" height="50" viewBox="0 0 50 50">
<circle cx="22" cy="22" r="20" fill="#302e31" stroke="#d8d8d8" stroke-width="2.5"/>
<circle cx="22" cy="12" r="6" fill="#d8d8d8"/><circle cx="13" cy="28" r="6" fill="#d8d8d8"/><circle cx="31" cy="28" r="6" fill="#d8d8d8"/>
<circle cx="22" cy="12" r="3.5" fill="#302e31"/><circle cx="13" cy="28" r="3.5" fill="#302e31"/><circle cx="31" cy="28" r="3.5" fill="#302e31"/>
<circle cx="36" cy="36" r="11" fill="#ee1111"/></svg>
<svg style="position:absolute;left:2936px;top:2005px" width="52" height="44" viewBox="0 0 52 44">
<path d="M10 42a9 9 0 0 1 0-18 13 13 0 0 1 25-3 10 10 0 0 1 3 21z" fill="#b8d4f2"/>
<circle cx="37" cy="14" r="11" fill="#e23b33"/><text x="37" y="19" font-family="Liberation Sans" font-size="14" font-weight="700" fill="#fff" text-anchor="middle">2</text></svg>
<div style="position:absolute;left:3000.0px;top:2018.1px;font-size:27px;line-height:27px;font-weight:400;color:#e8eef0;letter-spacing:-1.332px;white-space:pre;-webkit-text-stroke:0.50px #e8eef0;">26°C</div>
<div style="position:absolute;left:3072.0px;top:2018.1px;font-size:27px;line-height:27px;font-weight:400;color:#e8eef0;letter-spacing:-0.174px;white-space:pre;-webkit-text-stroke:0.50px #e8eef0;">Cloudy</div>
<svg style="position:absolute;left:3202px;top:2022px;" width="25" height="16" viewBox="0 0 25 16"><path d="M2 14L12.5 3 23 14" fill="none" stroke="#e8eef0" stroke-width="3"/></svg>
<svg style="position:absolute;left:3247px;top:2013px;" width="26" height="40" viewBox="0 0 26 40"><rect x="3" y="9" width="20" height="20" rx="4" fill="none" stroke="#e8eef0" stroke-width="2.6"/><path d="M6 5a10 10 0 0 1 14 0M6 33a10 10 0 0 0 14 0" fill="none" stroke="#e8eef0" stroke-width="2.4"/><rect x="8" y="14" width="8" height="9" fill="#e8eef0"/></svg>
<svg style="position:absolute;left:3293px;top:2017px;" width="33" height="30" viewBox="0 0 33 30"><path d="M2 28a26 26 0 0 1 26-26M8 28a20 20 0 0 1 20-20M14 28a14 14 0 0 1 14-14M20 28a8 8 0 0 1 8-8" fill="none" stroke="#e8eef0" stroke-width="2.4"/><path d="M24 24l8 4-8 2z" fill="#e8eef0"/></svg>
<svg style="position:absolute;left:3336px;top:2017px;" width="34" height="32" viewBox="0 0 34 32"><path d="M2 11h6l8-8v26l-8-8H2z" fill="none" stroke="#e8eef0" stroke-width="2.4"/><path d="M21 10a8 8 0 0 1 0 12M25 6a13 13 0 0 1 0 20" fill="none" stroke="#e8eef0" stroke-width="2.4"/></svg>
<div style="position:absolute;left:3386.0px;top:2020.7px;font-size:24px;line-height:24px;font-weight:400;color:#e8eef0;letter-spacing:-2.672px;white-space:pre;-webkit-text-stroke:0.50px #e8eef0;">ENG</div>
<div style="position:absolute;left:3471.0px;top:2003.4px;font-size:22px;line-height:22px;font-weight:400;color:#e8eef0;letter-spacing:0.214px;white-space:pre;-webkit-text-stroke:0.50px #e8eef0;">9:21 pm</div>
<div style="position:absolute;left:3456.0px;top:2037.4px;font-size:22px;line-height:22px;font-weight:400;color:#e8eef0;letter-spacing:-0.011px;white-space:pre;-webkit-text-stroke:0.50px #e8eef0;">09/10/2025</div>
<svg style="position:absolute;left:3598px;top:2014px;" width="37" height="38" viewBox="0 0 37 38"><path d="M2 2h33v26H24l-5.5 6L13 28H2z" fill="none" stroke="#e8eef0" stroke-width="2.6" stroke-linejoin="round"/></svg>
<div style="position:absolute;left:3670px;top:1995px;width:2px;height:70px;background:#3b4f66;border-radius:0px;"></div>
</div></body></html>
